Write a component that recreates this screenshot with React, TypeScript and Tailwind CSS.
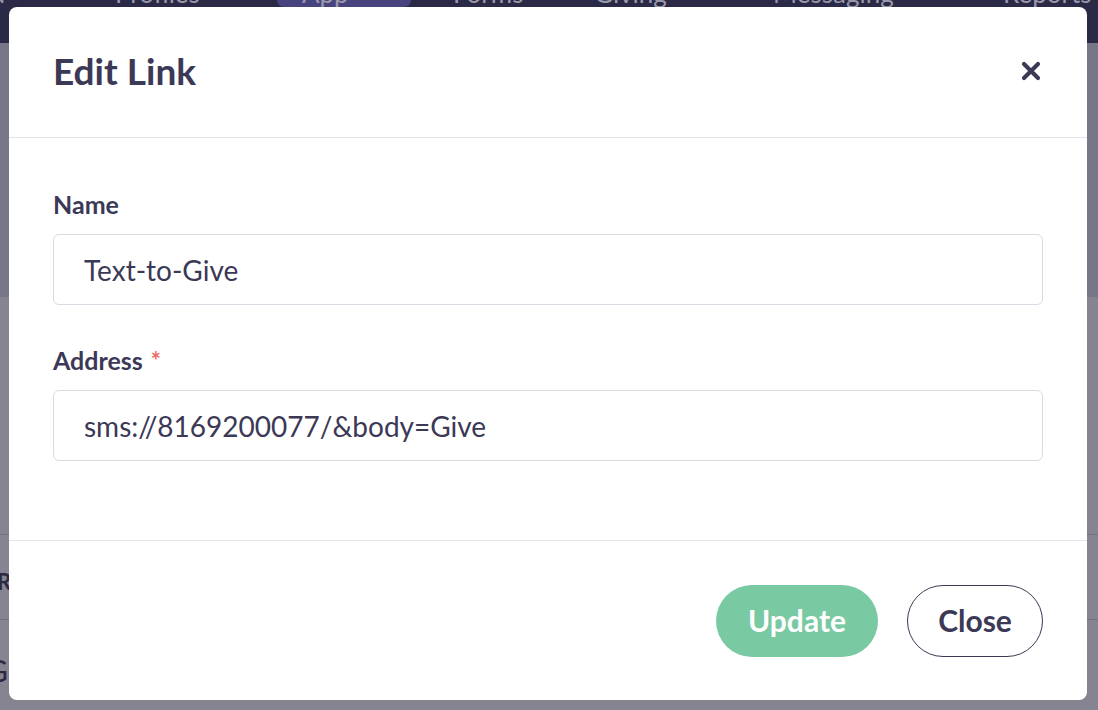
import React from 'react';
import { ChevronDown } from 'lucide-react';

const Field: React.FC<{ label: string; value: string; required?: boolean; className?: string }> = ({
  label,
  value,
  required,
  className = '',
}) => (
  <div className={className}>
    <label className="flex h-[30px] items-center text-[25px] leading-[30px] font-bold text-[#3b3956]">
      {label}
      {required && <span className="ml-[8px] mt-[2px] text-[24px] text-[#ec6b62]">*</span>}
    </label>
    <input
      readOnly
      value={value}
      className="mt-[15px] block h-[71px] w-full rounded-[6px] border border-[#dcdbe3] bg-white px-[30px] text-[28px] text-[#3b3956] outline-none"
    />
  </div>
);

const App: React.FC = () => {
  return (
    <div className="relative h-[710px] w-[1098px] overflow-hidden font-['Lato',sans-serif]">
      {/* page behind the dialog */}
      <div className="flex h-full flex-col">
        <nav className="h-[43px] shrink-0 overflow-hidden bg-[#2a2946]">
          <div className="flex text-[26px] leading-[28px] text-[#9998aa]">
            <div className="flex w-[115px] shrink-0 items-start justify-end gap-[38px] pr-[58px]">
              <span className="-mt-[21px] whitespace-nowrap">Dashboard</span>
              <ChevronDown className="-mt-[14px] h-[14px] w-[14px] shrink-0" />
            </div>
            <div className="flex w-[162px] shrink-0 items-start gap-[26px]">
              <span className="-mt-[21px]">Profiles</span>
              <ChevronDown className="-mt-[14px] h-[14px] w-[14px] shrink-0" />
            </div>
            <div className="flex h-[7px] w-[134px] shrink-0 items-start gap-[24px] rounded-b-[10px] bg-[#47437e] pl-[25px]">
              <span className="-mt-[21px]">App</span>
              <ChevronDown className="-mt-[14px] h-[14px] w-[14px] shrink-0" />
            </div>
            <div className="ml-[42px] flex w-[141px] shrink-0 items-start">
              <span className="-mt-[21px]">Forms</span>
            </div>
            <div className="flex w-[179px] shrink-0 items-start gap-[24px]">
              <span className="-mt-[21px]">Giving</span>
              <ChevronDown className="-mt-[14px] h-[14px] w-[14px] shrink-0" />
            </div>
            <div className="flex w-[230px] shrink-0 items-start gap-[26px]">
              <span className="-mt-[21px]">Messaging</span>
              <ChevronDown className="-mt-[14px] h-[14px] w-[14px] shrink-0" />
            </div>
            <div className="flex shrink-0 items-start">
              <span className="-mt-[21px]">Reports</span>
            </div>
          </div>
        </nav>
        <div className="h-[254px] shrink-0 bg-[#787787]" />
        <div className="flex flex-1 flex-col bg-[#858490]">
          <div className="h-[238px] border-b border-[#72717e]" />
          <div className="flex h-[85px] items-center border-b border-[#72717e] pt-[8px]">
            <span className="-ml-[3px] text-[22px] font-bold text-[#2b2a3e]">R</span>
          </div>
          <div className="flex flex-1 items-center pt-[10px]">
            <span className="-ml-[14px] text-[30px] text-[#2b2a3e]">G</span>
          </div>
        </div>
      </div>

      {/* dialog */}
      <div className="absolute left-[9px] top-[7px] flex h-[693px] w-[1078px] flex-col rounded-[8px] bg-white">
        <div className="flex h-[131px] shrink-0 items-center justify-between border-b border-[#e4e3ea] pl-[44px] pr-[46px] pb-[2px]">
          <h2 className="text-[37px] font-bold text-[#3b3956]">Edit Link</h2>
          <svg viewBox="0 0 20 20" className="h-[20px] w-[20px]" fill="none">
            <path d="M3 3L17 17M17 3L3 17" stroke="#3b3956" strokeWidth="4.2" strokeLinecap="round" />
          </svg>
        </div>
        <div className="flex-1 px-[44px] pt-[51px]">
          <Field label="Name" value="Text-to-Give" />
          <Field label="Address" value="sms://8169200077/&body=Give" required className="mt-[40px]" />
        </div>
        <div className="flex h-[160px] shrink-0 items-center justify-end gap-[29px] border-t border-[#e4e3ea] px-[44px]">
          <button className="h-[72px] w-[162px] rounded-full bg-[#79c9a3] text-[30px] font-bold text-white">
            Update
          </button>
          <button className="h-[72px] w-[136px] rounded-full border-[1.5px] border-[#3b3956] bg-white text-[30px] font-bold text-[#3b3956]">
            Close
          </button>
        </div>
      </div>
    </div>
  );
};

export default App;
